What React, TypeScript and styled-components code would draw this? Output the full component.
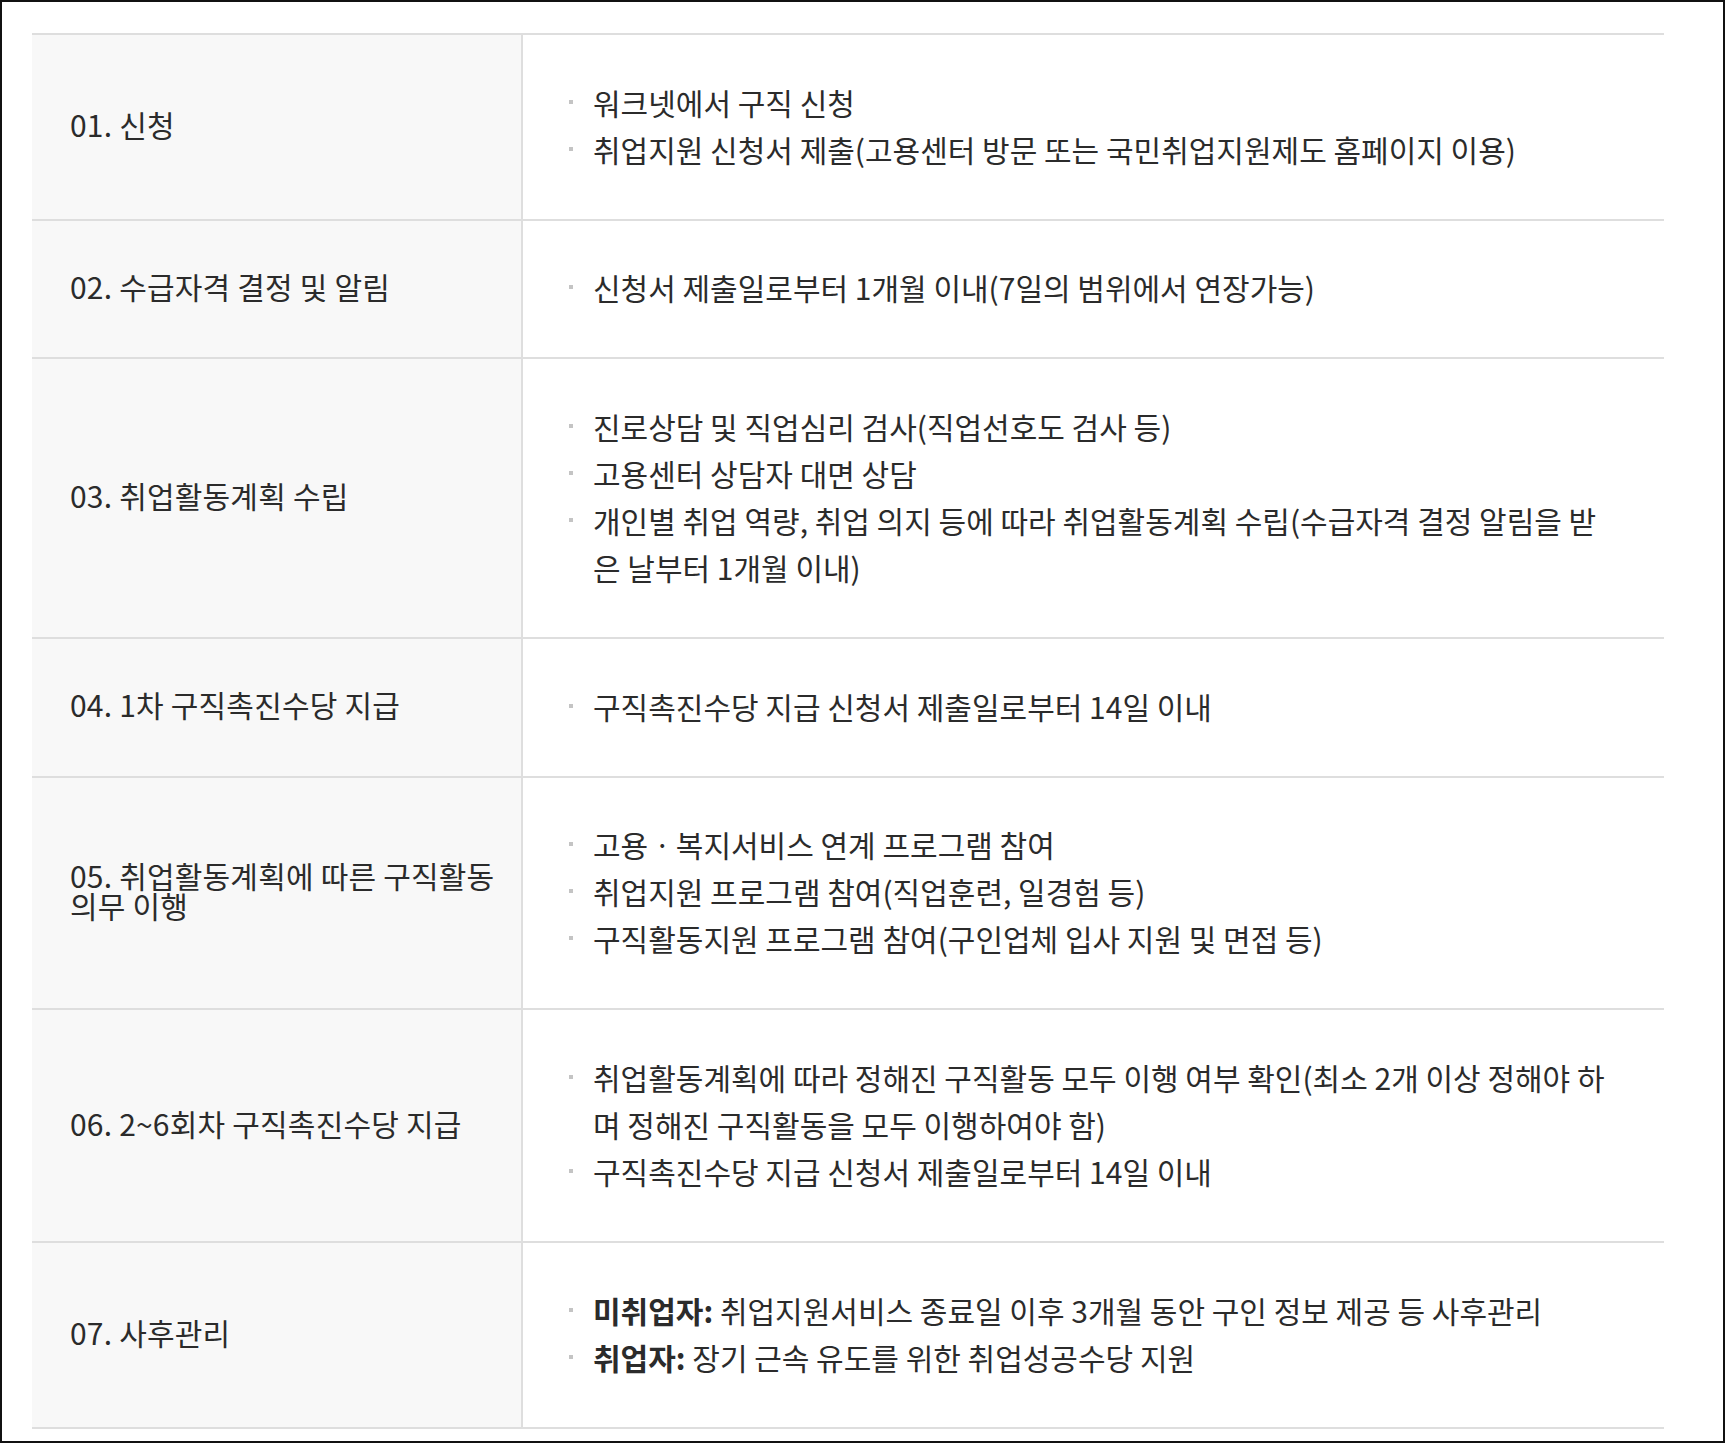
import React, { FC } from 'react'
import styled, { createGlobalStyle } from 'styled-components'

const GlobalStyle = createGlobalStyle`
    html, body {
        margin: 0;
        padding: 0;
        background: #fff;
    }
    body {
        font-family: 'Noto Sans CJK KR', 'Noto Sans', sans-serif;
        color: #2b2b2b;
    }
`

export const Frame = styled.div`
    width: 1725px;
    height: 1443px;
    box-sizing: border-box;
    border: 2px solid #111;
    padding: 31px 59px 0 30px;
    background: #fff;
`

export const Table = styled.table`
    width: 100%;
    border-collapse: separate;
    border-spacing: 0;
    border-top: 2px solid #dedede;
    table-layout: fixed;
`

export const Label = styled.th`
    padding: 0 20px 6px 38px;
    background: #f8f8f8;
    border-right: 2px solid #dedede;
    border-bottom: 2px solid #dedede;
    text-align: left;
    vertical-align: middle;
    font-size: 30px;
    font-weight: 400;
    line-height: 30px;
    color: #2b2b2b;
    letter-spacing: 0.2px;
`

export const Content = styled.td`
    padding: 43.5px 42px 46.2px 46px;
    border-bottom: 2px solid #dedede;
    vertical-align: middle;
`

export const List = styled.ul`
    margin: 0;
    padding: 0;
    list-style: none;
`

export const Item = styled.li`
    display: flex;
    align-items: flex-start;
    font-size: 30px;
    line-height: 47px;
    color: #2b2b2b;

    &::before {
        content: '';
        flex: 0 0 4px;
        height: 4px;
        margin: 21px 20px 0 0;
        background: #c4c4c4;
    }
`

export const Strong = styled.b`
    font-weight: 700;
`

type Step = {
    title: string
    items: React.ReactNode[]
}

const steps: Step[] = [
    {
        title: '01. 신청',
        items: [
            '워크넷에서 구직 신청',
            '취업지원 신청서 제출(고용센터 방문 또는 국민취업지원제도 홈페이지 이용)',
        ],
    },
    {
        title: '02. 수급자격 결정 및 알림',
        items: ['신청서 제출일로부터 1개월 이내(7일의 범위에서 연장가능)'],
    },
    {
        title: '03. 취업활동계획 수립',
        items: [
            '진로상담 및 직업심리 검사(직업선호도 검사 등)',
            '고용센터 상담자 대면 상담',
            '개인별 취업 역량, 취업 의지 등에 따라 취업활동계획 수립(수급자격 결정 알림을 받은 날부터 1개월 이내)',
        ],
    },
    {
        title: '04. 1차 구직촉진수당 지급',
        items: ['구직촉진수당 지급 신청서 제출일로부터 14일 이내'],
    },
    {
        title: '05. 취업활동계획에 따른 구직활동 의무 이행',
        items: [
            '고용ㆍ복지서비스 연계 프로그램 참여',
            '취업지원 프로그램 참여(직업훈련, 일경험 등)',
            '구직활동지원 프로그램 참여(구인업체 입사 지원 및 면접 등)',
        ],
    },
    {
        title: '06. 2~6회차 구직촉진수당 지급',
        items: [
            '취업활동계획에 따라 정해진 구직활동 모두 이행 여부 확인(최소 2개 이상 정해야 하며 정해진 구직활동을 모두 이행하여야 함)',
            '구직촉진수당 지급 신청서 제출일로부터 14일 이내',
        ],
    },
    {
        title: '07. 사후관리',
        items: [
            <span>
                <Strong>미취업자:</Strong> 취업지원서비스 종료일 이후 3개월 동안 구인 정보 제공 등 사후관리
            </span>,
            <span>
                <Strong>취업자:</Strong> 장기 근속 유도를 위한 취업성공수당 지원
            </span>,
        ],
    },
]

const App: FC = () => {
    return (
        <>
            <GlobalStyle />
            <Frame>
                <Table>
                    <colgroup>
                        <col style={{ width: 491 }} />
                        <col />
                    </colgroup>
                    <tbody>
                        {steps.map((step) => (
                            <tr key={step.title}>
                                <Label scope="row">{step.title}</Label>
                                <Content>
                                    <List>
                                        {step.items.map((item, i) => (
                                            <Item key={i}>{item}</Item>
                                        ))}
                                    </List>
                                </Content>
                            </tr>
                        ))}
                    </tbody>
                </Table>
            </Frame>
        </>
    )
}

export default App
